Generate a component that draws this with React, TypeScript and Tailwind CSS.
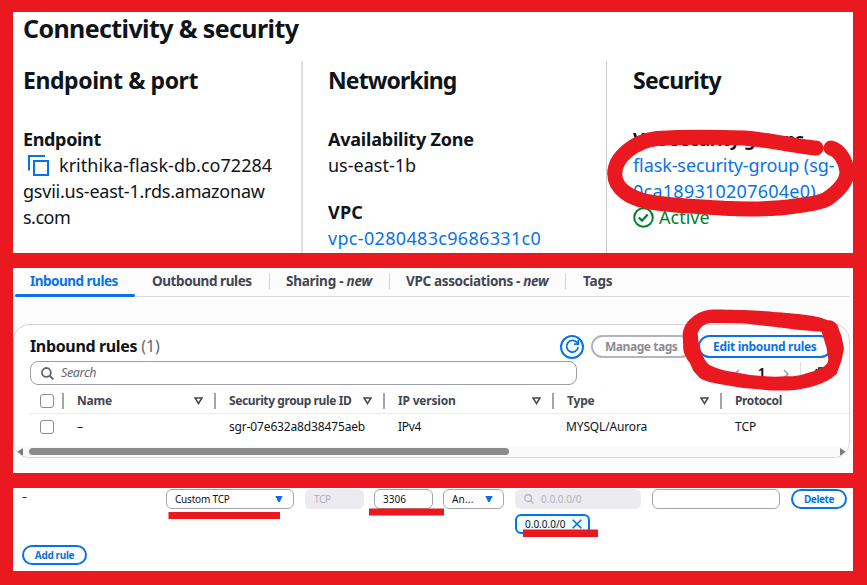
import type { ReactNode } from 'react';

function CopyIcon() {
  return (
    <svg width="21" height="21" viewBox="0 0 21 21" fill="none" stroke="#0972e8" strokeWidth="2" className="ml-[5px] mr-[10px] shrink-0">
      <path d="M1 15.500V1h16" />
      <rect x="6" y="6" width="14" height="14" />
    </svg>
  );
}

function Magnifier({ className, size }: { className: string; size: number }) {
  return (
    <svg width={size} height={size} viewBox="0 0 13 13" fill="none" stroke="currentColor" strokeWidth="1.8" className={className}>
      <circle cx="5.4" cy="5.4" r="4.4" />
      <path d="M8.6 8.6l3.8 3.8" />
    </svg>
  );
}

function Tab({ children, className }: { children: ReactNode; className: string }) {
  return (
    <div className={`relative flex h-[26px] shrink-0 items-center whitespace-nowrap ${className}`}>
      {children}
    </div>
  );
}

function HeadCell({ label, className, text, sort = true }: { label: string; className: string; text: string; sort?: boolean }) {
  return (
    <div className={`flex h-4 items-center border-l-2 border-[#a4a4ad] pl-[13px] ${className}`}>
      <span className={text}>{label}</span>
      {sort && (
        <svg width="9" height="8" viewBox="0 0 9 8" fill="none" stroke="#424650" strokeWidth="1.5" className="ml-auto mr-[11px]">
          <path d="M1 1h7L4.5 6.5z" />
        </svg>
      )}
    </div>
  );
}

function Caret() {
  return (
    <svg width="8" height="6" viewBox="0 0 8 6" fill="#0972e8" className="ml-auto">
      <path d="M0.3 0h7.4L5 5.4a1 1 0 0 1-2 0z" />
    </svg>
  );
}

function Connectivity() {
  return (
    <section className="h-[241px] w-[840px] overflow-hidden bg-white pl-[10px]">
      <h1 className="h-[49px] whitespace-nowrap text-[25px] font-bold leading-[33px] tracking-[-0.61px]">Connectivity &amp; security</h1>
      <div className="flex h-[192px] whitespace-nowrap text-[18px] leading-[26px]">
        <div className="w-[280px] shrink-0 border-r-2 border-[#dedee3]">
          <h2 className="mb-[27px] text-[23px] font-bold leading-[38px] tracking-[-0.43px]">Endpoint &amp; port</h2>
          <div className="font-bold tracking-[-0.35px]">Endpoint</div>
          <div className="flex h-[26px] items-center tracking-[0.03px]">
            <CopyIcon />
            krithika-flask-db.co72284
          </div>
          <div className="tracking-[-0.23px]">gsvii.us-east-1.rds.amazonaw</div>
          <div className="tracking-[-0.5px]">s.com</div>
        </div>
        <div className="w-[304px] shrink-0 border-r border-[#c9c9d1] pl-[25px]">
          <h2 className="mb-[27px] text-[23px] font-bold leading-[38px] tracking-[-0.9px]">Networking</h2>
          <div className="font-bold tracking-[-0.22px]">Availability Zone</div>
          <div>us-east-1b</div>
          <div className="mt-[21px] font-bold tracking-[0.2px]">VPC</div>
          <div className="tracking-[0.32px] text-[#0972e8]">vpc-0280483c9686331c0</div>
        </div>
        <div className="pl-[26px]">
          <h2 className="mb-[27px] text-[23px] font-bold leading-[38px] tracking-[-0.7px]">Security</h2>
          <div className="font-bold tracking-[-0.4px]">VPC security groups</div>
          <div className="tracking-[-0.1px] text-[#0972e8]">flask-security-group (sg-</div>
          <div className="tracking-[0.25px] text-[#0972e8]">0ca189310207604e0)</div>
          <div className="flex items-center text-[#00802f]">
            <svg width="21" height="21" viewBox="0 0 21 21" fill="none" stroke="currentColor" strokeWidth="2" className="mr-[5px]">
              <circle cx="10.5" cy="10.5" r="9.3" />
              <path d="M5.8 10.5l3.3 3.2 5.6-6.2" strokeWidth="2.3" />
            </svg>
            Active
          </div>
        </div>
      </div>
    </section>
  );
}

function InboundRules() {
  return (
    <section className="mt-[15px] h-[205px] w-[840px] overflow-hidden bg-[#fcfcfd] text-[13px]">
      <nav className="mr-1 flex h-[29px] border-b border-[#dadadf] text-[13.5px] font-bold text-[#424650]">
        <Tab className="w-[122px] pl-[17px] tracking-[-0.5px] text-[#0972e8]">
          Inbound rules
          <span className="absolute -bottom-[3px] left-[2px] h-[3px] w-[120px] rounded-full bg-[#0972e8]" />
        </Tab>
        <Tab className="w-[134px] pl-[17px] tracking-[-0.42px]">Outbound rules</Tab>
        <Tab className="w-[120px] pl-[17px] tracking-[-0.25px]"><Sep />Sharing -&nbsp;<i>new</i></Tab>
        <Tab className="w-[176px] pl-[17px] tracking-[-0.34px]"><Sep />VPC associations -&nbsp;<i>new</i></Tab>
        <Tab className="pl-[18px] tracking-[-0.2px]"><Sep />Tags</Tab>
      </nav>
      <div className="mt-[27px] flex h-[134px] w-[837px] flex-col overflow-hidden rounded-2xl border border-[#d5d5da] bg-white">
        <div className="flex h-[36px] shrink-0 items-center pl-4 pt-[7px] whitespace-nowrap">
          <h2 className="w-[530px] pb-px text-[16px] leading-[23px] tracking-[-0.1px] text-[#656871]">
            <b className="tracking-[-0.35px] text-[#0f141a]">Inbound rules</b> (1)
          </h2>
          <span className="flex size-6 shrink-0 items-center justify-center rounded-full border-2 border-[#0972e8]">
            <svg width="15" height="15" viewBox="0 0 15 15" fill="none" stroke="#0972e8" strokeWidth="1.8">
              <path d="M13.2 8.2A5.8 5.8 0 1 1 11.8 3.4L13 4.8" />
              <path d="M13.3 0.8v4.3H9" />
            </svg>
          </span>
          <span className="ml-[7px] flex h-[23px] w-[101px] shrink-0 items-center rounded-full border-2 border-[#b4b4bb] pl-[12px] text-[12px] font-bold tracking-[-0.45px] text-[#8c8c94]">Manage tags</span>
          <span className="ml-[6px] flex h-[23px] w-[134px] shrink-0 items-center rounded-full border-2 border-[#0972e8] pl-[13px] text-[12px] font-bold tracking-[-0.3px] text-[#0972e8]">Edit inbound rules</span>
        </div>
        <div className="flex h-[25px] shrink-0 pl-4">
          <div className="flex h-[24px] w-[547px] items-center rounded-lg border border-[#9c9ca4] pl-[10px] text-[12.5px] italic tracking-[-0.35px] text-[#656871]">
            <Magnifier size={13} className="mr-[7px] text-[#5f6570]" />
            Search
          </div>
          <div className="ml-[157px] flex h-[25px] items-center text-[#9a9aa3]">
            <svg width="6" height="10" viewBox="0 0 6 10" fill="none" stroke="currentColor" strokeWidth="1.5"><path d="M5 1L1 5l4 4" /></svg>
            <b className="ml-[18px] w-[8px] text-[12.5px] text-[#0f141a]">1</b>
            <svg width="6" height="10" viewBox="0 0 6 10" fill="none" stroke="currentColor" strokeWidth="1.5" className="ml-[17px]"><path d="M1 1l4 4-4 4" /></svg>
            <span className="ml-[11px] h-6 w-px bg-[#dedee3]" />
            <svg width="15" height="15" viewBox="0 0 15 15" fill="none" stroke="#424650" strokeWidth="1.8" className="ml-[12px] mt-[2px]">
              <circle cx="7.5" cy="7.5" r="2" />
              <path d="M6 1h3l.6 2.1 2-.4 1.700 2.7-1.6 2.1 1.6 2.1-1.700 2.7-2-.4L9 14H6l-.6-2.1-2 .4-1.700-2.7 1.600-2.1L1.700 5.4l1.700-2.7 2 .4z" />
            </svg>
          </div>
        </div>
        <div className="ml-4 flex h-[28px] shrink-0 items-center border-b border-[#ebebf0] pt-[3px] text-[12px] font-bold tracking-[-0.2px] text-[#424650] whitespace-nowrap">
          <span className="ml-[10px] mr-[8px] size-[14px] shrink-0 rounded-[3px] border border-[#8c8c94]" />
          <HeadCell label="Name" text="" className="w-[152px] shrink-0" />
          <HeadCell label="Security group rule ID" text="tracking-[-0.4px]" className="w-[169px] shrink-0" />
          <HeadCell label="IP version" text="" className="w-[169px] shrink-0" />
          <HeadCell label="Type" text="" className="w-[168px] shrink-0" />
          <HeadCell label="Protocol" text="tracking-[-0.4px]" sort={false} className="shrink-0" />
        </div>
        <div className="ml-4 flex h-[32px] shrink-0 items-center pb-[6px] text-[12px] tracking-[-0.05px] text-[#0f141a] whitespace-nowrap">
          <span className="ml-[10px] mr-[23px] size-[14px] shrink-0 rounded-[3px] border border-[#8c8c94]" />
          <span className="w-[152px] shrink-0">–</span>
          <span className="w-[169px] shrink-0 tracking-[-0.15px]">sgr-07e632a8d38475aeb</span>
          <span className="w-[168px] shrink-0 tracking-[-0.3px]">IPv4</span>
          <span className="w-[169px] shrink-0 tracking-[-0.15px]">MYSQL/Aurora</span>
          <span>TCP</span>
        </div>
        <div className="flex h-[11px] shrink-0 items-center bg-[#fafafa] pl-[3px] pr-[3px]">
          <svg width="6" height="8" viewBox="0 0 6 8" fill="#7b7b7b"><path d="M6 0v8L0 4z" /></svg>
          <span className="ml-[6px] h-[7px] w-[480px] rounded-full bg-[#8b8b8b]" />
          <svg width="6" height="8" viewBox="0 0 6 8" fill="#7b7b7b" className="ml-auto"><path d="M0 0v8l6-4z" /></svg>
        </div>
      </div>
    </section>
  );
}

function Sep() {
  return <span className="absolute left-0 top-[5px] h-4 w-px bg-[#d5d5da]" />;
}

function EditRules() {
  return (
    <section className="mt-[15px] h-[83px] w-[840px] overflow-hidden bg-white pl-[9px] text-[10px] whitespace-nowrap">
      <div className="flex pt-px">
        <span className="w-[144px] shrink-0 leading-[15px]">–</span>
        <div className="flex h-5 w-[128px] shrink-0 items-center rounded-md border border-[#a4a4ad] pl-[8px] pr-[10px] tracking-[-0.2px]">Custom TCP<Caret /></div>
        <div className="ml-[11px] flex h-5 w-[59px] shrink-0 items-center rounded-md bg-[#ebebf0] pl-[9px] tracking-[-0.3px] text-[#b4b4bb]">TCP</div>
        <div className="ml-[10px] flex h-5 w-[59px] shrink-0 items-center rounded-md border border-[#a4a4ad] pl-[8px]">3306</div>
        <div className="ml-[10px] flex h-5 w-[61px] shrink-0 items-center rounded-md border border-[#a4a4ad] pl-[8px] pr-[10px] tracking-[0.2px]">An...<Caret /></div>
        <div className="ml-[11px] flex h-5 w-[126px] shrink-0 items-center rounded-md bg-[#ebebf0] pl-[9px] text-[#b4b4bb]"><Magnifier size={10} className="mr-[7px]" />0.0.0.0/0</div>
        <div className="ml-[11px] h-5 w-[128px] shrink-0 rounded-md border border-[#a4a4ad]" />
        <div className="ml-[11px] flex h-5 w-[56px] shrink-0 items-center justify-center rounded-full border-2 border-[#0972e8] font-bold tracking-[-0.4px] text-[#0972e8]">Delete</div>
      </div>
      <div className="ml-[493px] mt-[5px] flex h-5 w-[75px] items-center rounded-md border-2 border-[#0972e8] bg-[#f0fbff] pl-[8px]">
        0.0.0.0/0
        <svg width="10" height="10" viewBox="0 0 10 10" stroke="#0972e8" strokeWidth="1.6" className="ml-[7px]"><path d="M.7.7l8.6 8.6M9.3.7L.7 9.3" /></svg>
      </div>
      <div className="mt-[11px] flex h-5 w-[65px] items-center justify-center rounded-full border-2 border-[#0972e8] font-bold tracking-[-0.35px] text-[#0972e8]">Add rule</div>
    </section>
  );
}

function Marker() {
  return (
    <svg width="867" height="585" viewBox="0 0 867 585" className="pointer-events-none absolute left-0 top-0" fill="#ea191f">
      <path
        d="M816 148C801 147 770 140 744 138C717 137 678 137 657 138.500C635 141 614.700 157 614.700 174C615 190 632 198 645 201C667 206 696 206 724 208.300C758 210 776 209 796 206C808 204 821 203 827 199C837 192 847 182 847 171.700C846 160 839 150 831 148"
        fill="none" stroke="#ea191f" strokeWidth="15" strokeLinecap="round"
      />
      <path
        fillRule="evenodd"
        transform="translate(675 300) scale(.33333)"
        d="M105 29C150 28 210 31 250 32C310 37 400 42 440 54L458 61Q475 59 487 75L500 110L507 145L500 180L485 222Q460 245 420 257Q380 268 350 271Q300 273 250 268Q200 265 150 255Q95 248 75 235L55 212L45 190Q28 168 25 150L23 100Q27 75 45 58Q70 33 105 29ZM105 69Q75 74 68 100Q70 145 85 170Q93 188 105 196Q140 213 180 217Q220 226 260 228Q300 232 330 229Q370 230 400 218Q445 208 457 190L460 180L455 145L440 95Q380 92 320 83Q250 75 200 70Q140 68 105 69Z"
      />
      <path d="M168.500 512H280v7H168.500zM369 508.500h75v7h-75zM523 529.500h75v7.500h-75z" />
    </svg>
  );
}

export default function App() {
  return (
    <main className="relative h-[585px] w-[867px] overflow-hidden bg-[#ea191f] pl-[13px] pt-3 font-['Noto_Sans',sans-serif] text-[#0f141a]">
      <Connectivity />
      <InboundRules />
      <EditRules />
      <Marker />
    </main>
  );
}
